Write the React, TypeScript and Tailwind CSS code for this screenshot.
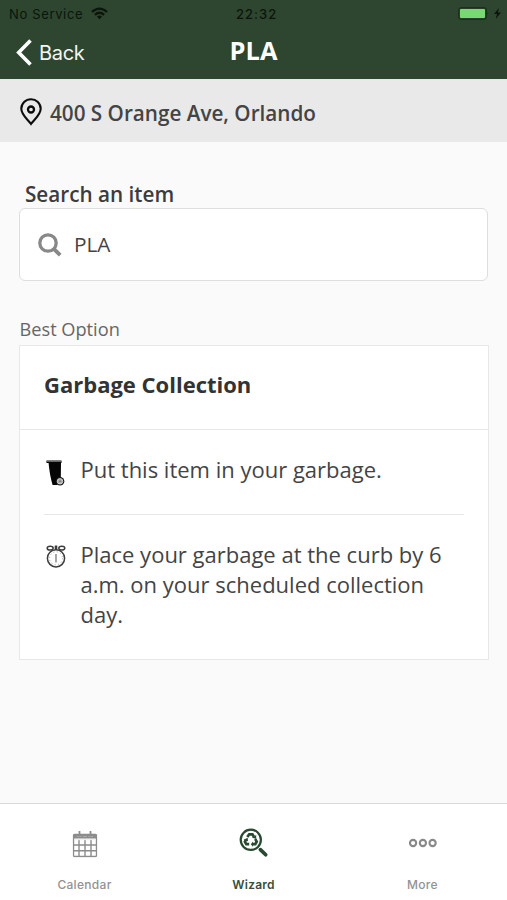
import type { ReactNode } from "react";

function StatusBar() {
  return (
    <div className="relative flex h-[28px] items-center justify-between pl-[9px] pr-[6px] font-['Inter'] text-[13px] text-[#0b150c]">
      <div className="flex items-center gap-[8px]">
        <span className="pt-[1px] tracking-[0.65px]">No Service</span>
        <svg width="17" height="13" viewBox="0 0 17 13" fill="none" stroke="currentColor" strokeWidth="2.3" className="-mt-[2px]">
          <path d="M1 5 Q8.5 -1.8 16 5" />
          <path d="M3.9 7.9 Q8.5 3.7 13.1 7.9" />
          <path d="M8.5 12.2 L5.9 9.6 Q8.5 7.4 11.1 9.6 Z" fill="currentColor" stroke="none" />
        </svg>
      </div>
      <span className="absolute left-1/2 -translate-x-[17.5px] pt-[1px] font-medium tracking-[1.05px]">22:32</span>
      <div className="-mt-[1px] flex items-center gap-[5px]">
        <svg width="31" height="13" viewBox="0 0 31 13">
          <rect x="0.7" y="0.7" width="27.6" height="11.6" rx="2.5" fill="none" stroke="#1b311d" strokeWidth="1.2" />
          <rect x="2" y="2" width="25" height="9" rx="1" fill="#78d873" />
          <path d="M29.3 4.6 Q31 6.5 29.3 8.4 Z" fill="#1b311d" />
        </svg>
        <svg width="7" height="11" viewBox="0 0 7 11" fill="currentColor">
          <path d="M5 0 L0 6 H3 L1.8 11 L7 4.6 H4 Z" />
        </svg>
      </div>
    </div>
  );
}

function Header() {
  return (
    <header className="h-[79px] shrink-0 bg-[#2e462f]">
      <StatusBar />
      <div className="relative flex h-[51px] items-center justify-center">
        <button className="absolute left-[16px] top-[10px] flex items-center gap-[7px] font-['Inter'] text-[20px] leading-[28px] tracking-[-0.3px] text-[#f2f5f2]">
          <svg width="16" height="27" viewBox="0 0 16 27" fill="none" stroke="#fff" strokeWidth="3.6">
            <path d="M14.5 1.5 L2.7 13.5 L14.5 25.5" />
          </svg>
          <span className="pt-[1px]">Back</span>
        </button>
        <h1 className="-mt-[7px] text-[25.4px] font-bold text-white">PLA</h1>
      </div>
    </header>
  );
}

function AddressBar() {
  return (
    <div className="flex h-[63px] shrink-0 items-center bg-[#e9e9e9] pl-[20px] pt-[7px]">
      <svg width="22" height="28" viewBox="0 0 22 28" fill="none" stroke="#0c0c0c" className="-mt-[4px] mr-[8px]">
        <path
          d="M11 26 C8 21.8 1.3 17 1.3 10.8 A9.7 9.5 0 0 1 20.7 10.8 C20.7 17 14 21.8 11 26 Z"
          strokeWidth="2.1"
        />
        <circle cx="11" cy="11.5" r="3" strokeWidth="2.3" />
      </svg>
      <span className="text-[20.7px] font-semibold text-[#444]">400 S Orange Ave, Orlando</span>
    </div>
  );
}

function BinIcon() {
  return (
    <svg width="20" height="26" viewBox="0 0 20 26">
      <path d="M0.5 0.5 H15.5 V3 H15 L14.8 18 L11 25 H6.6 C4.8 19 3.2 10 2.6 3 H0.5 Z" fill="#050505" />
      <path d="M0.5 1.5 H15.5" stroke="#666" strokeWidth="1" />
      <circle cx="14" cy="21.3" r="4.3" fill="#151515" />
      <circle cx="14" cy="21.3" r="2.8" fill="#aaa" stroke="#eee" strokeWidth="0.7" />
      <circle cx="14" cy="21.3" r="0.8" fill="#666" />
    </svg>
  );
}

function AlarmIcon() {
  return (
    <svg width="20" height="23" viewBox="0 0 20 23" fill="none" stroke="#3d3d3d" strokeWidth="1.5">
      <circle cx="10" cy="13.3" r="8.6" />
      <circle cx="10" cy="13.3" r="6.5" stroke="#999" strokeWidth="0.9" strokeDasharray="1 2.4" />
      <ellipse cx="4.2" cy="3.2" rx="3" ry="1.9" />
      <ellipse cx="15.8" cy="3.2" rx="3" ry="1.9" />
      <path d="M10 0.5 V5" strokeWidth="2.6" />
      <path d="M10 9 V17.5" stroke="#777" strokeWidth="1.3" />
    </svg>
  );
}

function Instruction({ icon, children }: { icon: ReactNode; children: ReactNode }) {
  return (
    <div className="flex">
      <div className="w-[36.5px] shrink-0 pl-[2px] pt-[6px]">{icon}</div>
      <p className="text-[22px] leading-[30px] text-[#444]">{children}</p>
    </div>
  );
}

function CalendarIcon() {
  return (
    <svg width="25" height="27" viewBox="0 0 25 27" fill="none" stroke="#8c8c8c" className="translate-x-[0.5px] translate-y-[0.5px]">
      <rect x="1" y="4" width="23" height="22" rx="1" strokeWidth="1.4" />
      <path d="M1.2 4.5 H23.8 V7.5 H1.2 Z" fill="#8c8c8c" />
      <path d="M4.5 6 H9 M10.5 6 H14.5 M16 6 H20.5" stroke="#aaa" strokeWidth="1" />
      <path d="M7 0.5 V6 M18 0.5 V6" strokeWidth="1.8" />
      <path d="M6.5 9 V26 M12.5 9 V26 M18.5 9 V26 M1 14.5 H24 M1 20.3 H24" strokeWidth="1.4" />
      <path d="M2 9.2 H23" stroke="#eee" strokeWidth="1" />
    </svg>
  );
}

function WizardIcon() {
  return (
    <svg width="30" height="30" viewBox="0 0 30 30" fill="none" stroke="#294a30">
      <circle cx="11.8" cy="11.8" r="10.1" strokeWidth="2.2" />
      <path d="M21.4 21.6 L26.7 26.8" strokeWidth="3.7" strokeLinecap="round" />
      {/* recycling loop */}
      <g strokeWidth="2.7">
        <path d="M8.3 9 L10.2 6.4 H13.4 L15 8.8" />
        <path d="M16.3 11 L17.7 13.8 L16.3 16.2 H13.6" />
        <path d="M10.2 16.2 H7.3 L5.9 13.8 L7 11.6" />
      </g>
      <g fill="#294a30" stroke="none">
        <path d="M12.9 9.8 L17.2 7 V10.9 Z" />
        <path d="M14 13.6 V18.8 L11.8 16.2 Z" />
        <path d="M4.7 11.8 L8.7 9.8 L9 13.2 Z" />
      </g>
    </svg>
  );
}

function MoreIcon() {
  return (
    <svg width="28" height="10" viewBox="0 0 28 10" fill="none" stroke="#898989" strokeWidth="2.1">
      <circle cx="4.1" cy="5" r="3.1" />
      <circle cx="13.9" cy="5" r="3.1" />
      <circle cx="23.6" cy="5" r="3.1" />
    </svg>
  );
}

function Tab({ icon, label, active = false }: { icon: ReactNode; label: string; active?: boolean }) {
  return (
    <button className="flex flex-1 flex-col items-center pt-[21px]">
      <span className="flex h-[36px] items-center justify-center">{icon}</span>
      <span
        className={`mt-[16px] font-['Inter'] text-[12px] leading-[16px] ${
          active ? "font-semibold tracking-[0.2px] text-[#35503a]" : "font-medium tracking-[0.3px] text-[#929292]"
        }`}
      >
        {label}
      </span>
    </button>
  );
}

export default function App() {
  return (
    <div className="flex h-[900px] w-[507px] flex-col overflow-hidden bg-[#fafafa] font-['Open_Sans',sans-serif]">
      <Header />
      <AddressBar />

      <main className="flex-1 px-[19px] pt-[38px]">
        <label className="block pl-[6px] text-[20.7px] font-semibold leading-[28px] text-[#3c3c3c]">Search an item</label>
        <div className="flex h-[73px] items-center rounded-md border border-[#dedede] bg-white pl-[18px]">
          <svg width="24" height="24" viewBox="0 0 24 24" fill="none" stroke="#888">
            <circle cx="10" cy="10" r="8.2" strokeWidth="3.3" />
            <path d="M15.8 15.8 L22.2 22.2" strokeWidth="3.8" />
          </svg>
          <span className="ml-[12px] text-[20.8px] text-[#444]">PLA</span>
        </div>

        <h2 className="mb-[2px] mt-[34px] pl-[0.5px] text-[18.2px] leading-[28px] text-[#666]">Best Option</h2>
        <section className="h-[315px] w-[470px] border border-[#e8e8e8] bg-white">
          <h3 className="flex h-[84px] items-center border-b border-[#e8e8e8] pb-[7px] pl-[24px] text-[22px] font-bold text-[#333]">
            Garbage Collection
          </h3>
          <div className="mx-[24px] h-[85px] border-b border-[#e8e8e8] pt-[24px]">
            <Instruction icon={<BinIcon />}>Put this item in your garbage.</Instruction>
          </div>
          <div className="mx-[24px] pt-[24px]">
            <Instruction icon={<AlarmIcon />}>
              Place your garbage at the curb by 6 a.m. on your scheduled collection day.
            </Instruction>
          </div>
        </section>
      </main>

      <nav className="flex h-[97px] shrink-0 border-t border-[#d9d9d9] bg-white">
        <Tab icon={<CalendarIcon />} label="Calendar" />
        <Tab icon={<WizardIcon />} label="Wizard" active />
        <Tab icon={<MoreIcon />} label="More" />
      </nav>
    </div>
  );
}
